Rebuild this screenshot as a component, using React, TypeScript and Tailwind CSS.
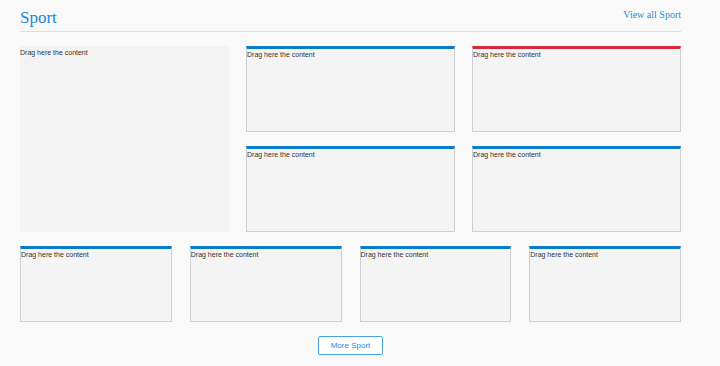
import React from 'react';

type Accent = 'blue' | 'red';

const DropZone: React.FC<{ accent?: Accent; className?: string }> = ({ accent, className = '' }) => {
  const bar = accent === 'red' ? 'border-t-[#d9273d]' : 'border-t-[#0b7bcc]';
  return (
    <div
      className={`bg-[#f4f4f4] border border-[#cfcfcf] border-t-[3px] ${bar} ${className}`}
    >
      <p className="text-[7px] leading-[9px] text-[#333] pt-[1px]" style={{ fontFamily: '"Liberation Sans", Arial, sans-serif' }}>
        Drag here the content
      </p>
    </div>
  );
};

const App: React.FC = () => {
  return (
    <div className="w-[720px] h-[366px] bg-[#f9f9f9] overflow-hidden">
      <div className="ml-[20px] w-[661px]">
        {/* Header */}
        <div className="flex items-end justify-between h-[32px] border-b border-[#dcdcdc] pb-[3px]">
          <h2
            className="text-[17px] leading-[20px] text-[#2386d2]"
            style={{ fontFamily: '"Liberation Serif", "DejaVu Serif", serif' }}
          >
            Sport
          </h2>
          <a
            className="text-[10px] leading-[12px] text-[#2a8ad8] mb-[7px]"
            style={{ fontFamily: '"Liberation Serif", "DejaVu Serif", serif' }}
          >
            View all Sport
          </a>
        </div>

        {/* Top block */}
        <div className="grid grid-cols-3 grid-rows-[86px_86px] gap-x-[17px] gap-y-[14px] mt-[14px]">
          <div className="row-span-2 bg-[#f3f3f3]">
            <p className="text-[7px] leading-[9px] text-[#333] pt-[2px]" style={{ fontFamily: '"Liberation Sans", Arial, sans-serif' }}>
              Drag here the content
            </p>
          </div>
          <DropZone accent="blue" />
          <DropZone accent="red" />
          <DropZone accent="blue" />
          <DropZone accent="blue" />
        </div>

        {/* Bottom row */}
        <div className="grid grid-cols-4 gap-x-[18px] mt-[14px]">
          {[0, 1, 2, 3].map((i) => (
            <DropZone key={i} accent="blue" className="h-[76px]" />
          ))}
        </div>

        <div className="flex justify-center mt-[14px]">
          <button
            className="w-[65px] h-[19px] border border-[#4aa3e6] rounded-[2px] bg-white text-[8px] text-[#2a8ad8]"
            style={{ fontFamily: '"Liberation Sans", Arial, sans-serif' }}
          >
            More Sport
          </button>
        </div>
      </div>
    </div>
  );
};

export default App;
